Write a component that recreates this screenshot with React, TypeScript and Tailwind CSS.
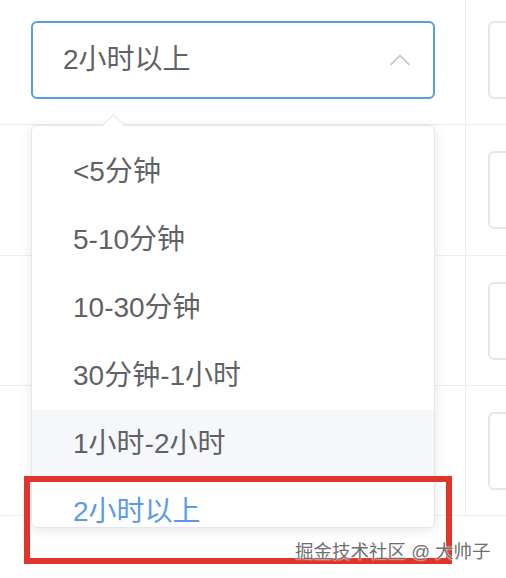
const options = ["<5分钟", "5-10分钟", "10-30分钟", "30分钟-1小时", "1小时-2小时", "2小时以上"];

const InputBox = () => <div className="w-[200px] h-[78px] rounded-[6px] border-2 border-[#e4e7ed]" />;

const App = () => {
  return (
    <div
      className="relative w-[506px] h-[578px] overflow-hidden bg-white"
      style={{ fontFamily: '"Liberation Sans", "Noto Sans CJK SC", sans-serif' }}
    >
      <div className="flex flex-col">
        <div className="flex h-[125px] border-b border-[#ebeef5]">
          <div className="w-[466px] shrink-0 border-r border-[#ebeef5] pt-[21px] pl-[31px]">
            <div className="w-[404px] h-[78px] rounded-[6px] border-2 border-[#5a9be8] flex items-center justify-between pl-[30px] pr-[22px]">
              <span className="text-[28px] text-[#606266]">2小时以上</span>
              <svg width="22" height="12" viewBox="0 0 22 12" fill="none">
                <path d="M1.5 11L11 1.5L20.5 11" stroke="#c8cbd1" strokeWidth="1.8" />
              </svg>
            </div>
          </div>
          <div className="pl-[22px] pt-[21px] shrink-0">
            <InputBox />
          </div>
        </div>
        {[131, 130, 130].map((h, i) => (
          <div key={i} className={`flex border-b border-[#ebeef5] ${h === 131 ? "h-[131px]" : "h-[130px]"}`}>
            <div className="w-[466px] shrink-0 border-r border-[#ebeef5]" />
            <div className="pl-[22px] shrink-0 flex items-center">
              <InputBox />
            </div>
          </div>
        ))}
      </div>

      {/* dropdown */}
      <div className="absolute left-[31px] top-[125px] w-[404px] h-[403px]">
        <div className="absolute left-[75px] -top-[8px] w-[15px] h-[15px] rotate-45 bg-white border-l border-t border-[#e4e7ed] z-10" />
        <div className="relative h-full rounded-[6px] border border-[#e4e7ed] bg-white shadow-[0_2px_12px_0_rgba(0,0,0,0.1)] overflow-hidden pt-[12px]">
          {options.map((o, i) => (
            <div
              key={o}
              className={`h-[68px] flex items-center pl-[41px] text-[28px] ${i === 4 ? "bg-[#f5f7fa]" : ""} ${i === 5 ? "text-[#5a9be8]" : "text-[#606266]"}`}
            >
              {o}
            </div>
          ))}
        </div>
      </div>

      {/* highlight box */}
      <div className="absolute left-[24px] top-[476px] w-[428px] h-[88px] border-[6px] border-[#e0352b]" />

      <div
        className="absolute left-[295px] top-[538px] text-[18.5px] text-[#707070] whitespace-nowrap"
        style={{ textShadow: "0 0 2px #fff, 0 0 2px #fff" }}
      >
        掘金技术社区 @ 大帅子
      </div>
    </div>
  );
};

export default App;
